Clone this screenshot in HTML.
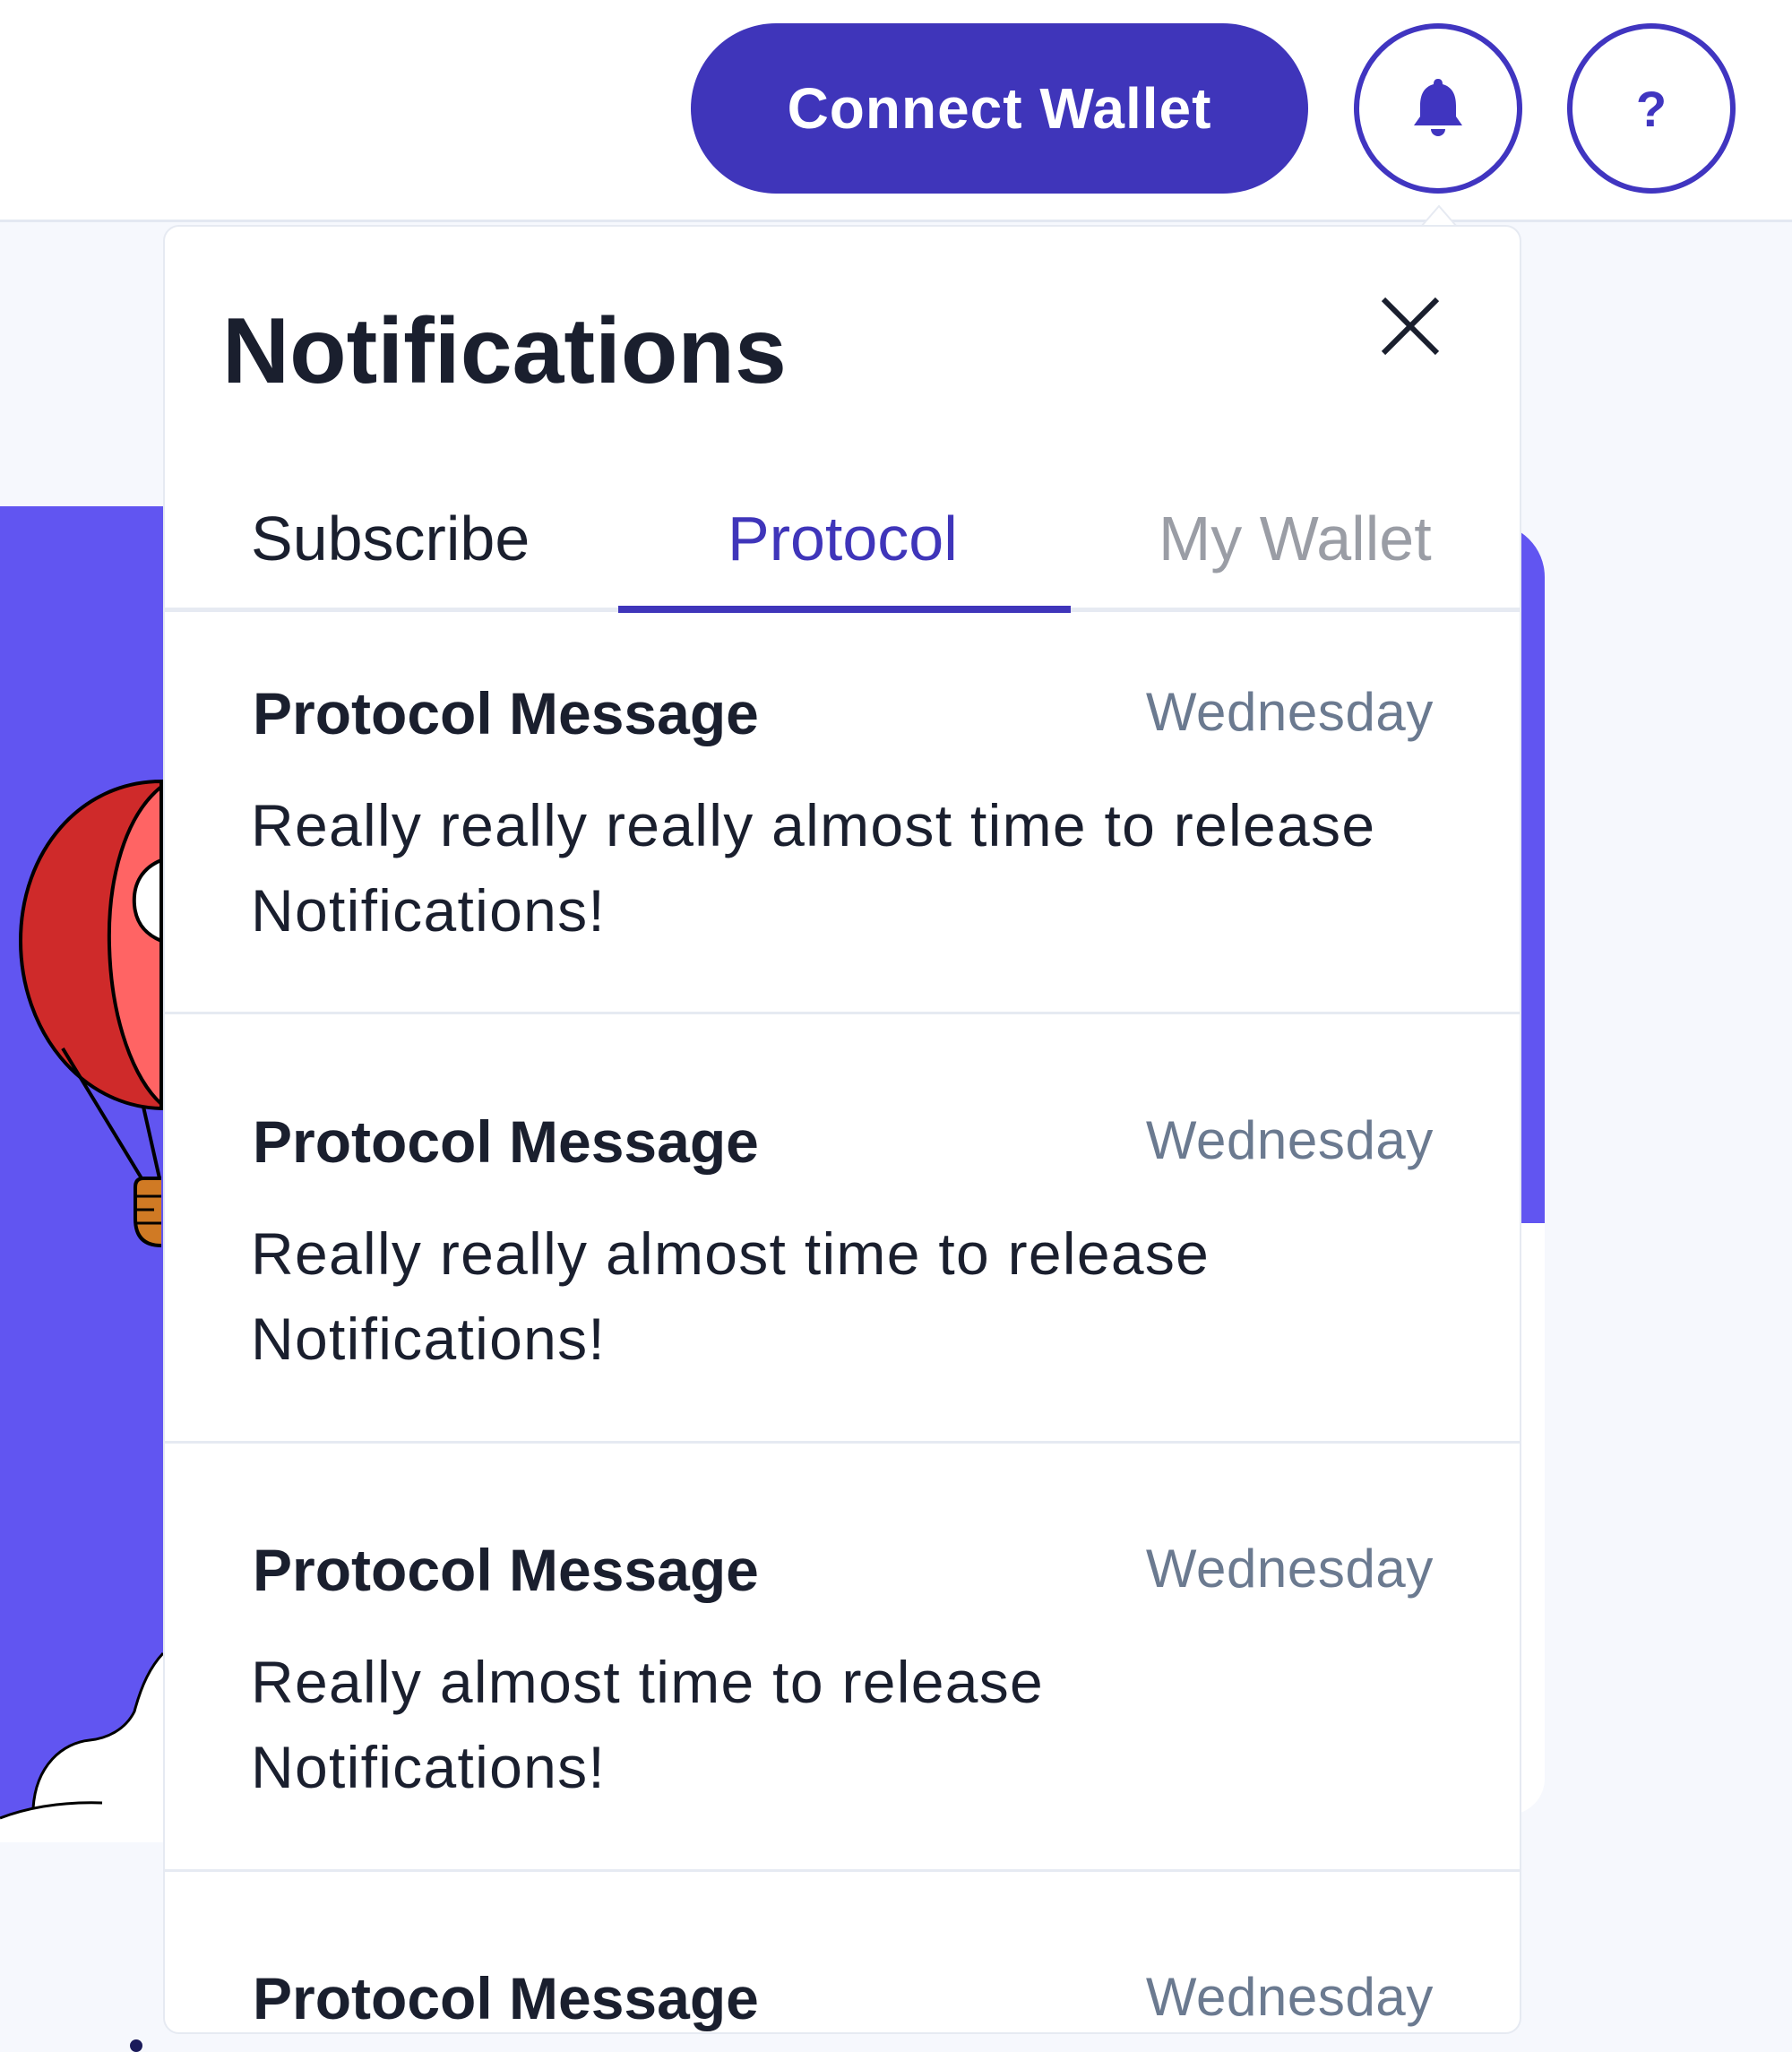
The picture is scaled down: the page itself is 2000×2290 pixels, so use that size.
<!DOCTYPE html>
<html><head><meta charset="utf-8"><style>
*{margin:0;padding:0;box-sizing:border-box}
body{width:2000px;height:2289px;background:#F6F8FD;position:relative;overflow:hidden;font-family:"Liberation Sans",sans-serif}
.hdr{position:absolute;left:0;top:0;width:2000px;height:248px;background:#fff;border-bottom:3px solid #E3E8F2}
.btn{position:absolute;left:771px;top:26px;width:689px;height:190px;border-radius:95px;background:#3F35BA;color:#fff;font-weight:bold;font-size:64px;display:flex;align-items:center;justify-content:center;letter-spacing:1px}
.circ{position:absolute;top:26px;width:188px;height:190px;border-radius:50%;border:6px solid #4035C0;display:flex;align-items:center;justify-content:center;color:#4035C0;font-weight:bold;font-size:56px;background:#fff}
.popup{position:absolute;left:182px;top:251px;width:1516px;height:2019px;background:#fff;border-radius:18px;border:2px solid #E6EAF2;overflow:hidden}
.abs{position:absolute;white-space:nowrap}
.t{font-weight:bold;font-size:66px;color:#1A1F2E}
.d{font-size:60px;color:#6B7A90;right:96px;letter-spacing:0.6px}
.b{font-size:66px;color:#1A1F2E;line-height:95px;letter-spacing:1.3px}
.sep{position:absolute;left:0;width:100%;height:3px;background:#E6EAF2}
</style></head><body>
<div class="hdr"></div>
<div style="position:absolute;left:0;top:565px;width:200px;height:1491px;background:#6155F1"></div>
<div style="position:absolute;left:1660px;top:584px;width:64px;height:781px;background:#6155F1;border-top-right-radius:60px"></div>
<div style="position:absolute;left:1660px;top:1365px;width:64px;height:660px;background:#fff;border-bottom-right-radius:40px"></div>
<svg style="position:absolute;left:0;top:850px" width="200" height="1210">
<path d="M180 22 C90 22 23 100 23 200 C23 300 90 385 180 387 Z" fill="#CF2A2A" stroke="#000" stroke-width="4"/>
<path d="M180 28 C140 60 120 130 122 205 C124 290 150 355 180 382 Z" fill="#FF6464" stroke="#000" stroke-width="4"/>
<path d="M180 110 C160 118 148 135 150 160 C152 185 168 195 180 200 Z" fill="#fff" stroke="#000" stroke-width="4"/>
<path d="M70 320 L158 465 M160 385 L178 465" stroke="#000" stroke-width="4" fill="none"/>
<path d="M180 465 L160 465 Q151 465 151 475 L151 510 Q151 540 180 540" fill="#D07A24" stroke="#000" stroke-width="4"/>
<path d="M151 485 H180 M151 500 H172 M151 515 H180" stroke="#000" stroke-width="3"/>
<path d="M0 1179 L37 1168 C40 1120 70 1095 100 1092 C120 1090 140 1080 150 1060 C158 1030 168 1010 182 995 L182 1206 L0 1206 Z" fill="#fff"/>
<path d="M37 1168 C40 1120 70 1095 100 1092 C120 1090 140 1080 150 1060 C158 1030 168 1010 182 995" fill="none" stroke="#000" stroke-width="3"/>
<path d="M0 1179 Q50 1160 114 1162" fill="none" stroke="#000" stroke-width="3"/>
</svg>
<div style="position:absolute;left:145px;top:2276px;width:14px;height:14px;border-radius:50%;background:#1A1A5A"></div>

<div class="btn">Connect Wallet</div>
<div class="circ" style="left:1511px"><svg width="64" height="70" viewBox="0 0 64 70"><path d="M32 2 C28 2 27 5 27 8 C16 11 12 20 12 32 L12 44 L5 54 L59 54 L52 44 L52 32 C52 20 48 11 37 8 C37 5 36 2 32 2 Z" fill="#4035C0"/><path d="M24 58 A8 8 0 0 0 40 58 Z" fill="#4035C0"/></svg></div>
<div class="circ" style="left:1749px">?</div>
<svg style="position:absolute;left:1586px;top:228px" width="40" height="26"><path d="M0 25 L20 2 L40 25" fill="#fff" stroke="#E6EAF2" stroke-width="2"/></svg>

<div class="popup">
 <div class="abs" style="left:64px;top:80px;font-weight:bold;font-size:104px;color:#1A1F2E">Notifications</div>
 <svg class="abs" style="left:1356px;top:77px" width="68" height="68"><path d="M4 4 L64 64 M64 4 L4 64" stroke="#1A1F2E" stroke-width="6"/></svg>
 <div class="abs" style="left:96px;top:308px;font-size:70px;color:#1A1F2E">Subscribe</div>
 <div class="abs" style="left:628px;top:308px;font-size:70px;color:#3F35BA">Protocol</div>
 <div class="abs" style="left:1109px;top:308px;font-size:70px;color:#9A9DA5">My Wallet</div>
 <div class="sep" style="top:425px;height:5px"></div>
 <div class="abs" style="left:506px;top:423px;width:505px;height:8px;background:#3F35BA"></div>

 <div class="abs t" style="left:98px;top:505px">Protocol Message</div>
 <div class="abs d" style="top:507px">Wednesday</div>
 <div class="abs b" style="left:96px;top:621px">Really really really almost time to release<br>Notifications!</div>
 <div class="sep" style="top:876px"></div>

 <div class="abs t" style="left:98px;top:983px">Protocol Message</div>
 <div class="abs d" style="top:985px">Wednesday</div>
 <div class="abs b" style="left:96px;top:1099px">Really really almost time to release<br>Notifications!</div>
 <div class="sep" style="top:1355px"></div>

 <div class="abs t" style="left:98px;top:1461px">Protocol Message</div>
 <div class="abs d" style="top:1463px">Wednesday</div>
 <div class="abs b" style="left:96px;top:1577px">Really almost time to release<br>Notifications!</div>
 <div class="sep" style="top:1833px"></div>

 <div class="abs t" style="left:98px;top:1939px">Protocol Message</div>
 <div class="abs d" style="top:1941px">Wednesday</div>
</div>
</body></html>
